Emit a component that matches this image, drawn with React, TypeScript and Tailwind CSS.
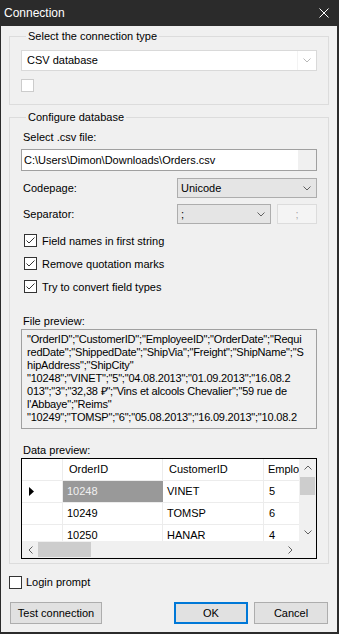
import React from 'react';

const Chevron = ({ color = '#606060', up = false }: { color?: string; up?: boolean }) => (
  <svg width="8" height="5" viewBox="0 0 8 5" fill="none">
    <path d={up ? 'M0.5 4.5 L4 1 L7.5 4.5' : 'M0.5 0.5 L4 4 L7.5 0.5'} stroke={color} strokeWidth="1" />
  </svg>
);

const SideChevron = ({ left = false }: { left?: boolean }) => (
  <svg width="5" height="8" viewBox="0 0 5 8" fill="none">
    <path d={left ? 'M4.5 0.5 L1 4 L4.5 7.5' : 'M0.5 0.5 L4 4 L0.5 7.5'} stroke="#606060" strokeWidth="1" />
  </svg>
);

const CheckBox = ({ checked = false, disabled = false }: { checked?: boolean; disabled?: boolean }) => (
  <div
    className={`w-[13px] h-[13px] shrink-0 bg-white border flex items-center justify-center ${
      disabled ? 'border-[#cccccc]' : 'border-[#333333]'
    }`}
  >
    {checked && (
      <svg width="11" height="11" viewBox="0 0 11 11" fill="none">
        <path d="M1.5 5.5 L4 8 L9.5 2.5" stroke="#333333" strokeWidth="1" />
      </svg>
    )}
  </div>
);

const previewLines = [
  '"OrderID";"CustomerID";"EmployeeID";"OrderDate";"Requi',
  'redDate";"ShippedDate";"ShipVia";"Freight";"ShipName";"S',
  'hipAddress";"ShipCity"',
  '"10248";"VINET";"5";"04.08.2013";"01.09.2013";"16.08.2',
  '013";"3";"32,38 ₽";"Vins et alcools Chevalier";"59 rue de',
  'l\'Abbaye";"Reims"',
  '"10249";"TOMSP";"6";"05.08.2013";"16.09.2013";"10.08.2',
];

const rows = [
  { id: '10248', customer: 'VINET', emp: '5', current: true },
  { id: '10249', customer: 'TOMSP', emp: '6' },
  { id: '10250', customer: 'HANAR', emp: '4' },
];

const checks = ['Field names in first string', 'Remove quotation marks', 'Try to convert field types'];

export default function App() {
  return (
    <div className="w-[339px] h-[634px] flex flex-col bg-[#f0f0f0] border-l border-r-2 border-b-2 border-[#2b2b2b] overflow-hidden text-[11px] text-black font-['Liberation_Sans',Arial,sans-serif]">
      {/* Title bar */}
      <div className="h-[26px] shrink-0 bg-[#2b2b2b] flex items-center justify-between pl-[3px] pr-[8px]">
        <span className="text-white text-[12px] leading-[14px]">Connection</span>
        <svg width="10" height="10" viewBox="0 0 10 10" fill="none">
          <path d="M0.5 0.5 L9.5 9.5 M9.5 0.5 L0.5 9.5" stroke="#ffffff" strokeWidth="1" />
        </svg>
      </div>

      <div className="flex-1 flex flex-col px-[8px] pt-[3px] min-w-0">
        {/* Connection type */}
        <fieldset className="min-w-0 border border-[#dcdcdc] px-[11px] pb-[12px]">
          <legend className="ml-[5px] px-[2px] leading-[14px]">Select the connection type</legend>
          <div className="mt-[7px] h-[21px] flex bg-white border border-[#d9d9d9]">
            <div className="flex-1 flex items-center pl-[5px]">CSV database</div>
            <div className="w-[19px] flex items-center justify-center border-l border-[#f3f3f3]">
              <Chevron color="#b8b8b8" />
            </div>
          </div>
          <div className="mt-[8px]">
            <CheckBox disabled />
          </div>
        </fieldset>

        {/* Configure database */}
        <fieldset className="min-w-0 mt-[5px] border border-[#dcdcdc] px-[11px] pb-[4px]">
          <legend className="ml-[5px] px-[2px] leading-[14px]">Configure database</legend>
          <div className="mt-[6px] ml-[2px] leading-[14px]">Select .csv file:</div>
          <div className="mt-[5px] h-[22px] flex border border-[#a0a0a0] bg-[#f0f0f0]">
            <div className="flex-1 flex items-center pl-[2px] bg-white">C:\Users\Dimon\Downloads\Orders.csv</div>
            <div className="w-[18px]" />
          </div>

          <div className="mt-[7px] h-[20px] flex items-center justify-between">
            <span className="ml-[2px]">Codepage:</span>
            <div className="w-[140px] h-full flex items-center justify-between bg-[#e5e5e5] border border-[#adadad] pl-[3px] pr-[5px]">
              <span>Unicode</span>
              <Chevron />
            </div>
          </div>

          <div className="mt-[6px] h-[20px] flex items-center">
            <span className="ml-[2px] flex-1">Separator:</span>
            <div className="w-[94px] h-full flex items-center justify-between bg-[#e5e5e5] border border-[#adadad] pl-[3px] pr-[5px]">
              <span>;</span>
              <Chevron />
            </div>
            <div className="ml-[6px] w-[40px] h-full flex items-center justify-center bg-[#f4f4f4] border border-[#dcdcdc] text-[#a8a8a8]">
              ;
            </div>
          </div>

          {checks.map((label) => (
            <div key={label} className="mt-[10px] h-[13px] ml-[3px] flex items-center gap-[5px]">
              <CheckBox checked />
              <span className="leading-[14px]">{label}</span>
            </div>
          ))}

          <div className="mt-[21px] ml-[2px] leading-[14px]">File preview:</div>
          <div className="mt-[1px] h-[100px] border border-[#a0a0a0] pl-[5px] pt-[3px] overflow-hidden tracking-[-0.2px]">
            {previewLines.map((line, i) => (
              <div key={i} className="leading-[13px] whitespace-pre">
                {line}
              </div>
            ))}
          </div>

          <div className="mt-[14px] ml-[2px] leading-[14px]">Data preview:</div>
          <div className="mt-[1px] h-[101px] border border-black bg-white flex flex-col">
            <div className="flex-1 flex min-h-0">
              <div className="flex-1 min-w-0 flex flex-col overflow-hidden">
                <div className="h-[22px] shrink-0 flex border-b border-[#ececec]">
                  <div className="w-[41px] shrink-0 border-r border-[#ececec]" />
                  <div className="w-[100px] shrink-0 border-r border-[#ececec] flex items-center pl-[6px]">OrderID</div>
                  <div className="w-[101px] shrink-0 border-r border-[#ececec] flex items-center pl-[6px]">CustomerID</div>
                  <div className="flex-1 min-w-0 flex items-center pl-[4px] whitespace-nowrap overflow-hidden">EmployeeID</div>
                </div>
                {rows.map((r) => (
                  <div key={r.id} className="h-[22px] shrink-0 flex border-b border-[#ececec]">
                    <div className="w-[41px] shrink-0 border-r border-[#ececec] flex items-center pl-[7px]">
                      {r.current && (
                        <svg width="5" height="9" viewBox="0 0 5 9">
                          <path d="M0 0 L5 4.5 L0 9 Z" fill="#000000" />
                        </svg>
                      )}
                    </div>
                    <div
                      className={`w-[100px] shrink-0 border-r flex items-center pl-[4px] ${
                        r.current ? 'bg-[#999999] text-[#f0f0f0] border-[#999999]' : 'border-[#ececec]'
                      }`}
                    >
                      {r.id}
                    </div>
                    <div className="w-[101px] shrink-0 border-r border-[#ececec] flex items-center pl-[4px]">{r.customer}</div>
                    <div className="flex-1 min-w-0 flex items-center pl-[5px]">{r.emp}</div>
                  </div>
                ))}
              </div>
              {/* vertical scrollbar */}
              <div className="w-[17px] shrink-0 bg-[#f0f0f0] flex flex-col items-center">
                <div className="h-[17px] flex items-center justify-center">
                  <Chevron up />
                </div>
                <div className="mt-[1px] w-[15px] h-[18px] bg-[#cdcdcd]" />
                <div className="flex-1" />
                <div className="h-[17px] flex items-center justify-center">
                  <Chevron />
                </div>
              </div>
            </div>
            {/* horizontal scrollbar */}
            <div className="h-[17px] shrink-0 flex bg-[#f0f0f0]">
              <div className="flex-1 flex items-center">
                <div className="w-[16px] h-full flex items-center justify-center">
                  <SideChevron left />
                </div>
                <div className="w-[53px] h-[15px] bg-[#cdcdcd]" />
                <div className="flex-1" />
                <div className="w-[17px] h-full flex items-center justify-center">
                  <SideChevron />
                </div>
              </div>
              <div className="w-[17px] shrink-0" />
            </div>
          </div>
        </fieldset>

        <div className="mt-[11px] flex items-center gap-[4px]">
          <CheckBox />
          <span className="leading-[14px]">Login prompt</span>
        </div>

        <div className="mt-[13px] flex items-center">
          <button className="ml-[1px] w-[92px] h-[22px] bg-[#e1e1e1] border border-[#adadad] flex items-center justify-center">
            Test connection
          </button>
          <div className="flex-1" />
          <button className="w-[74px] h-[22px] bg-[#e1e1e1] border-2 border-[#0078d7] flex items-center justify-center">
            OK
          </button>
          <button className="ml-[6px] mr-[1px] w-[74px] h-[22px] bg-[#e1e1e1] border border-[#adadad] flex items-center justify-center">
            Cancel
          </button>
        </div>
      </div>
    </div>
  );
}
